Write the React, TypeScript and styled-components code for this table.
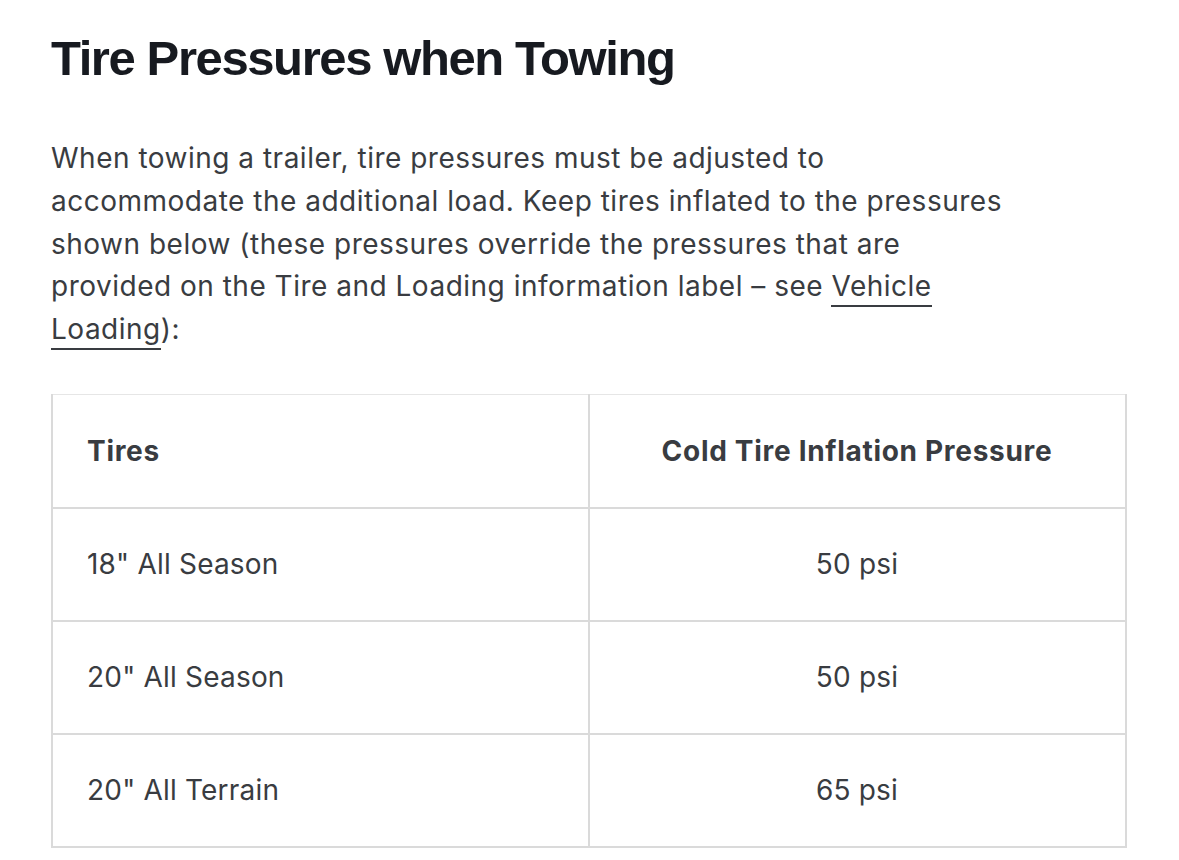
import React from "react";
import styled, { createGlobalStyle } from "styled-components";

const Global = createGlobalStyle`
  html, body { margin: 0; padding: 0; background: #ffffff; }
  body { font-family: Inter, "Liberation Sans", Arial, sans-serif; -webkit-font-smoothing: antialiased; }
`;

const Page = styled.main`
  padding: 25px 52px 0 51px;
  width: 1076px;
`;

const Title = styled.h1`
  margin: 0;
  font-family: "Liberation Sans", Arial, sans-serif;
  font-weight: 700;
  font-size: 49px;
  line-height: 66px;
  letter-spacing: -1.4px;
  color: #171a20;
`;

const Para = styled.p`
  margin: 46px 0 0;
  font-size: 28px;
  line-height: 42.75px;
  letter-spacing: 0.5px;
  color: #393c41;
`;

const Link = styled.a`
  color: #393c41;
  text-decoration: none;
  border-bottom: 2px solid #393c41;
  padding-bottom: 2px;
`;

const Table = styled.table`
  margin-top: 43px;
  width: 1076px;
  border-collapse: collapse;
  table-layout: fixed;
`;

const Cell = styled.td<{ $align?: "left" | "center" }>`
  height: 111px;
  padding: 0 35px 0 34px;
  border: 2px solid #dadada;
  text-align: ${(p) => p.$align ?? "left"};
  vertical-align: middle;
  font-size: 28px;
  letter-spacing: 0.2px;
  color: #393c41;
`;

const HeadCell = styled(Cell).attrs({ as: "th" })`
  height: 112px;
  font-weight: 700;
  letter-spacing: 0.7px;
  border-top: 1px solid #e6e6e6;
`;

const rows: [string, string][] = [
  ['18" All Season', "50 psi"],
  ['20" All Season', "50 psi"],
  ['20" All Terrain', "65 psi"],
];

export default function App() {
  return (
    <>
      <Global />
      <Page>
        <Title>Tire Pressures when Towing</Title>
        <Para>
          When towing a trailer, tire pressures must be adjusted to
          <br />
          accommodate the additional load. Keep tires inflated to the pressures
          <br />
          shown below (these pressures override the pressures that are
          <br />
          provided on the Tire and Loading information label – see{" "}
          <Link href="#">Vehicle</Link>
          <br />
          <Link href="#">Loading</Link>):
        </Para>
        <Table>
          <thead>
            <tr>
              <HeadCell $align="left">Tires</HeadCell>
              <HeadCell $align="center">Cold Tire Inflation Pressure</HeadCell>
            </tr>
          </thead>
          <tbody>
            {rows.map(([t, p]) => (
              <tr key={t}>
                <Cell $align="left">{t}</Cell>
                <Cell $align="center">{p}</Cell>
              </tr>
            ))}
          </tbody>
        </Table>
      </Page>
    </>
  );
}
